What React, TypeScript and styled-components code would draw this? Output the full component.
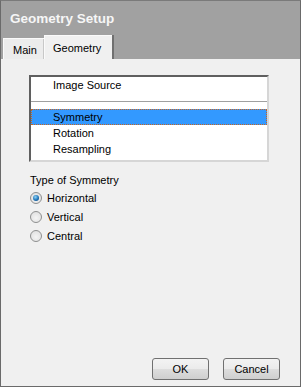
import * as React from 'react';
import styled, { createGlobalStyle } from 'styled-components';

const GlobalStyle = createGlobalStyle`
    html, body {
        margin: 0;
        padding: 0;
        background: #f0f0f0;
    }
    * {
        box-sizing: border-box;
    }
`;

const Window = styled.div`
    width: 301px;
    height: 387px;
    display: flex;
    flex-direction: column;
    border: 1px solid #6a6a6a;
    border-top-color: #7a7a7a;
    font-family: 'Liberation Sans', Arial, sans-serif;
    font-size: 11px;
    color: #000000;
`;

const Header = styled.div`
    height: 58px;
    background-color: #a1a1a1;
    display: flex;
    flex-direction: column;
    justify-content: space-between;
`;

const Title = styled.div`
    padding: 10px 0 0 9px;
    font-size: 13.5px;
    font-weight: bold;
    color: #f6f6f6;
    line-height: 16px;
`;

const TabStrip = styled.div`
    display: flex;
    align-items: flex-end;
    padding-left: 2px;
`;

const Tab = styled.div<{ $active?: boolean }>`
    height: ${(p) => (p.$active ? '24px' : '21px')};
    padding: ${(p) => (p.$active ? '5px 0 0 8px' : '4px 0 0 9px')};
    width: ${(p) => (p.$active ? '68px' : '41px')};
    background-color: ${(p) => (p.$active ? '#f0f0f0' : '#ececec')};
    border-top: 1px solid #fafafa;
    border-left: 1px solid #fafafa;
    box-shadow: ${(p) => (p.$active ? '2px 0 0 #707070' : 'inset -1px 0 0 #c8c8c8')};
    line-height: 14px;
`;

const Body = styled.div`
    flex: 1;
    background-color: #f0f0f0;
    display: flex;
    flex-direction: column;
    padding: 16px 0 0 28px;
`;

const ListBox = styled.div`
    width: 240px;
    height: 87px;
    background-color: #ffffff;
    border-style: solid;
    border-width: 2px;
    border-color: #5f5f5f #d6d6d6 #d6d6d6 #5f5f5f;
    display: flex;
    flex-direction: column;
`;

const ListItem = styled.div<{ $selected?: boolean }>`
    height: 16px;
    line-height: 14px;
    padding-left: 21px;
    background-color: ${(p) => (p.$selected ? '#3399ff' : 'transparent')};
    border: 1px ${(p) => (p.$selected ? 'dotted #c8641e' : 'solid transparent')};
`;

const Separator = styled.div`
    height: 16px;
    display: flex;
    align-items: center;
    &::after {
        content: '';
        flex: 1;
        height: 1px;
        background-color: #a0a0a0;
    }
`;

const GroupLabel = styled.div`
    margin-top: 11px;
    padding-left: 1px;
    line-height: 14px;
`;

const RadioList = styled.div`
    display: flex;
    flex-direction: column;
    gap: 5px;
    margin-top: 4px;
    padding-left: 1px;
`;

const RadioRow = styled.label`
    display: flex;
    align-items: center;
    gap: 5px;
    height: 14px;
`;

const RadioDot = styled.span<{ $checked?: boolean }>`
    width: 12px;
    height: 12px;
    border-radius: 50%;
    border: 1px solid #8e8f8f;
    background: radial-gradient(circle at 50% 60%, #f4f4f4 0%, #dcdcdc 100%);
    display: flex;
    align-items: center;
    justify-content: center;

    &::after {
        content: '';
        display: ${(p) => (p.$checked ? 'block' : 'none')};
        width: 6px;
        height: 6px;
        border-radius: 50%;
        background: radial-gradient(circle at 40% 35%, #8fd4f6 0%, #1f74b8 55%, #0c3e6e 100%);
    }
`;

const ButtonRow = styled.div`
    margin-top: auto;
    display: flex;
    justify-content: flex-end;
    gap: 14px;
    padding: 0 20px 6px 0;
`;

const Button = styled.button`
    width: 57px;
    height: 22px;
    border: 1px solid #707070;
    border-radius: 3px;
    background: linear-gradient(#f3f3f3 0%, #ebebeb 50%, #dddddd 51%, #cfcfcf 100%);
    font-family: 'Liberation Sans', Arial, sans-serif;
    font-size: 11px;
    color: #000000;
    padding: 0;
`;

const symmetryTypes = ['Horizontal', 'Vertical', 'Central'];

function App() {
    return (
        <>
            <GlobalStyle />
            <Window>
                <Header>
                    <Title>Geometry Setup</Title>
                    <TabStrip>
                        <Tab>Main</Tab>
                        <Tab $active>Geometry</Tab>
                    </TabStrip>
                </Header>
                <Body>
                    <ListBox>
                        <ListItem>Image Source</ListItem>
                        <Separator />
                        <ListItem $selected>Symmetry</ListItem>
                        <ListItem>Rotation</ListItem>
                        <ListItem>Resampling</ListItem>
                    </ListBox>
                    <GroupLabel>Type of Symmetry</GroupLabel>
                    <RadioList>
                        {symmetryTypes.map((t, i) => (
                            <RadioRow key={t}>
                                <RadioDot $checked={i === 0} />
                                {t}
                            </RadioRow>
                        ))}
                    </RadioList>
                    <ButtonRow>
                        <Button>OK</Button>
                        <Button>Cancel</Button>
                    </ButtonRow>
                </Body>
            </Window>
        </>
    );
}

export default App;
